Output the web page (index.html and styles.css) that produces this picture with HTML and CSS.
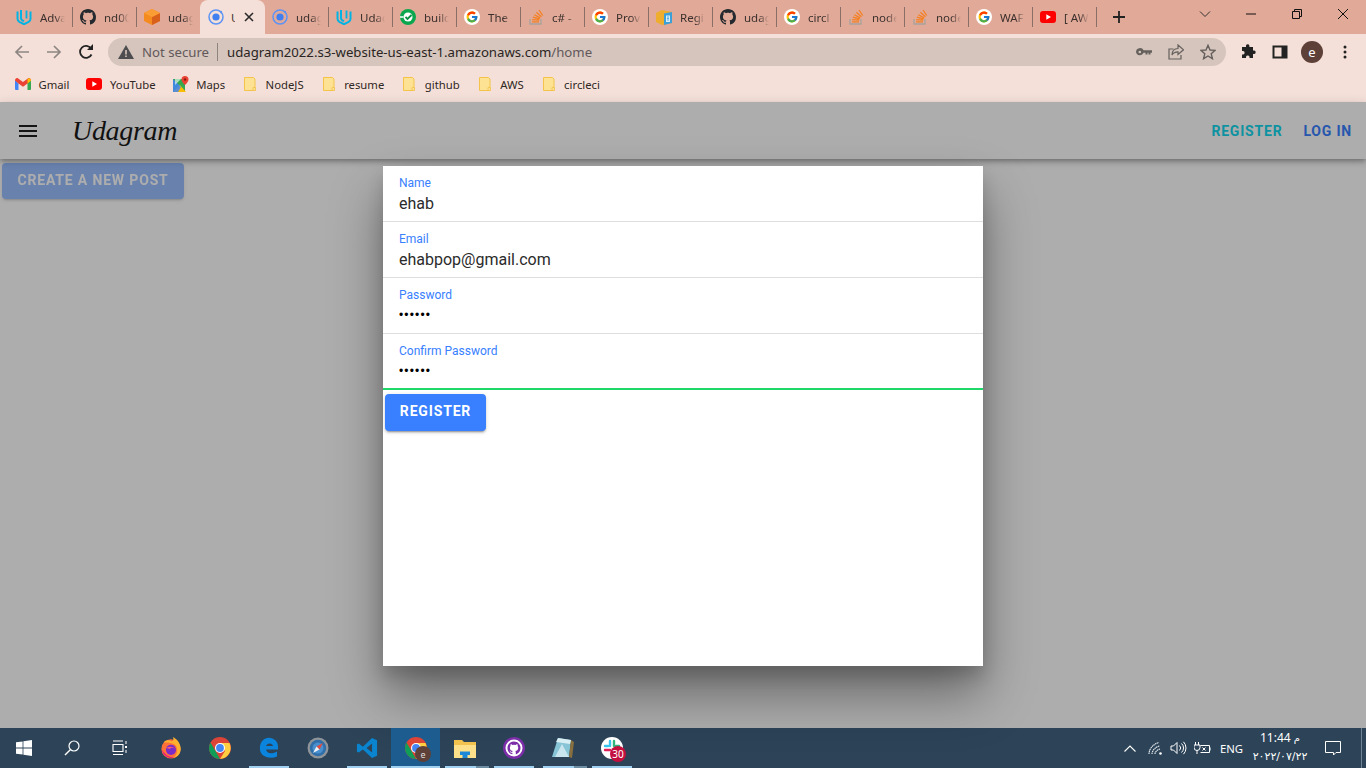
FILE: index.html
```html
<!DOCTYPE html>
<html lang="en">
<head>
<meta charset="utf-8">
<title>Udagram</title>
<link rel="stylesheet" href="styles.css">
</head>
<body>
<svg class="defs" width="0" height="0" aria-hidden="true">
  <defs>
    <symbol id="i-udacity" viewBox="0 0 16 16"><path d="M1.500 2.500v7.300c0 1.500.7 2.400 1.900 3.100L8 15.200l4.600-2.300c1.200-.7 1.900-1.600 1.900-3.100V2.500" fill="none" stroke="#02b3e4" stroke-width="2"/><path d="M5 1v8.300c0 .9.500 1.500 1.300 2l1.700.9" fill="none" stroke="#02b3e4" stroke-width="2"/><path d="M10.500 1.500v8" fill="none" stroke="#02b3e4" stroke-width="1.800"/></symbol>
    <symbol id="i-github" viewBox="0 0 16 16"><path fill="#24292e" d="M8 0C3.580 0 0 3.580 0 8c0 3.540 2.290 6.530 5.470 7.590.4.070.55-.17.55-.38 0-.19-.01-.82-.01-1.490-2.010.37-2.530-.49-2.690-.94-.09-.23-.48-.94-.82-1.130-.28-.15-.68-.52-.01-.53.63-.01 1.080.58 1.230.82.72 1.210 1.870.87 2.330.66.070-.52.280-.87.510-1.070-1.780-.2-3.640-.89-3.640-3.950 0-.87.310-1.590.820-2.150-.08-.2-.36-1.020.080-2.120 0 0 .67-.21 2.200.82.64-.18 1.320-.27 2-.27.68 0 1.360.09 2 .27 1.530-1.040 2.200-.82 2.200-.82.44 1.100.16 1.920.08 2.120.51.56.82 1.270.82 2.150 0 3.070-1.870 3.750-3.650 3.950.29.25.54.73.54 1.480 0 1.070-.01 1.930-.01 2.200 0 .21.15.46.55.38A8.013 8.013 0 0 0 16 8c0-4.420-3.580-8-8-8z"/></symbol>
    <symbol id="i-box" viewBox="0 0 16 16"><path d="M8 0 16 4v8l-8 4-8-4V4z" fill="#f58a1f"/><path d="M8 8 16 4v8l-8 4z" fill="#d9601a"/><path d="M8 0 16 4 8 8 0 4z" fill="#fb9d35"/></symbol>
    <symbol id="i-ionic" viewBox="0 0 16 16"><circle cx="8" cy="8" r="7" fill="none" stroke="#5c93f5" stroke-width="1.500"/><circle cx="8" cy="8" r="3.600" fill="#3f7ff0"/><circle cx="13" cy="3" r="1.200" fill="#5c93f5"/></symbol>
    <symbol id="i-build" viewBox="0 0 16 16"><circle cx="8" cy="8" r="8" fill="#0ba74f"/><circle cx="8" cy="8" r="4.500" fill="#fff"/><path d="M5.500 8 7.500 10 11.500 6" fill="none" stroke="#0b8f44" stroke-width="1.800"/><path d="M0 8h3.500" stroke="#fff" stroke-width="1.500"/></symbol>
    <symbol id="i-google" viewBox="0 0 16 16"><circle cx="8" cy="8" r="8" fill="#fff"/><svg x="1.500" y="1.500" width="13" height="13" viewBox="0 0 48 48"><path fill="#FFC107" d="M43.611 20.083H42V20H24v8h11.303c-1.649 4.657-6.080 8-11.303 8-6.627 0-12-5.373-12-12s5.373-12 12-12c3.059 0 5.842 1.154 7.961 3.039l5.657-5.657C34.046 6.053 29.268 4 24 4 12.955 4 4 12.955 4 24s8.955 20 20 20 20-8.955 20-20c0-1.341-.138-2.650-.389-3.917z"/><path fill="#FF3D00" d="M6.306 14.691l6.571 4.819C14.655 15.108 18.961 12 24 12c3.059 0 5.842 1.154 7.961 3.039l5.657-5.657C34.046 6.053 29.268 4 24 4 16.318 4 9.656 8.337 6.306 14.691z"/><path fill="#4CAF50" d="M24 44c5.166 0 9.860-1.977 13.409-5.192l-6.190-5.238A11.910 11.910 0 0 1 24 36c-5.202 0-9.619-3.317-11.283-7.946l-6.522 5.025C9.505 39.556 16.227 44 24 44z"/><path fill="#1976D2" d="M43.611 20.083H42V20H24v8h11.303a12.040 12.040 0 0 1-4.087 5.571l6.193 5.237C36.971 39.205 44 34 44 24c0-1.341-.138-2.650-.389-3.917z"/></svg></symbol>
    <symbol id="i-so" viewBox="0 0 16 16"><path d="M2 10v5h11v-5" fill="none" stroke="#a8a39d" stroke-width="1.300"/><path d="M4 12.800h7M4.200 10.600l6.900.6M4.900 8.200l6.700 1.800M6.300 5.700l6 3.200M8.400 3.300l5.100 4.400M11 1l3.800 5.500" fill="none" stroke="#f48024" stroke-width="1.300"/></symbol>
    <symbol id="i-reg" viewBox="0 0 16 16"><path d="M0 4 6 1l10 2v11l-10 2-6-3z" fill="#eead2d"/><path d="M8 4.500 16 3v11l-8 2z" fill="#3d9fd8"/><path d="M10 6.500h4v6.500h-4z" fill="#d7effa"/><path d="M11 8h2M11 9.500h2M11 11h2" stroke="#3d9fd8" stroke-width=".8"/></symbol>
    <symbol id="i-yt" viewBox="0 0 16 12"><rect width="16" height="12" rx="3" fill="#f00"/><path d="M6.300 3.300 11 6 6.300 8.700z" fill="#fff"/></symbol>
    <symbol id="i-folder" viewBox="0 0 16 16"><path d="M2.500 1.500h9l1.500 1.500v11.500H2.500z" fill="#fde293" stroke="#f3c34a"/><path d="M11 14.500h2.500V11.500H11z" fill="#fde293" stroke="#f3c34a" stroke-width=".8"/></symbol>
  </defs>
</svg>

<div class="browser">
  <div class="tabstrip">
    <div class="tab"><svg class="fav"><use href="#i-udacity"/></svg><span class="tab-t">Adva</span></div>
    <div class="tab"><svg class="fav"><use href="#i-github"/></svg><span class="tab-t">nd00</span></div>
    <div class="tab tab-pre"><svg class="fav"><use href="#i-box"/></svg><span class="tab-t">udag</span></div>
    <div class="tab tab-active"><svg class="fav"><use href="#i-ionic"/></svg><span class="tab-t tab-t-short">U</span><svg class="tab-x" viewBox="0 0 10 10"><path d="M1 1l8 8M9 1l-8 8" stroke="#2b2b2b" stroke-width="1.600"/></svg></div>
    <div class="tab"><svg class="fav"><use href="#i-ionic"/></svg><span class="tab-t">udag</span></div>
    <div class="tab"><svg class="fav"><use href="#i-udacity"/></svg><span class="tab-t">Udac</span></div>
    <div class="tab"><svg class="fav"><use href="#i-build"/></svg><span class="tab-t">build</span></div>
    <div class="tab"><svg class="fav"><use href="#i-google"/></svg><span class="tab-t">The</span></div>
    <div class="tab"><svg class="fav"><use href="#i-so"/></svg><span class="tab-t">c# -</span></div>
    <div class="tab"><svg class="fav"><use href="#i-google"/></svg><span class="tab-t">Prov</span></div>
    <div class="tab"><svg class="fav"><use href="#i-reg"/></svg><span class="tab-t">Regi</span></div>
    <div class="tab"><svg class="fav"><use href="#i-github"/></svg><span class="tab-t">udag</span></div>
    <div class="tab"><svg class="fav"><use href="#i-google"/></svg><span class="tab-t">circl</span></div>
    <div class="tab"><svg class="fav"><use href="#i-so"/></svg><span class="tab-t">node</span></div>
    <div class="tab"><svg class="fav"><use href="#i-so"/></svg><span class="tab-t">node</span></div>
    <div class="tab"><svg class="fav"><use href="#i-google"/></svg><span class="tab-t">WAF</span></div>
    <div class="tab"><svg class="fav fav-yt"><use href="#i-yt"/></svg><span class="tab-t">[ AW</span></div>
    <svg class="newtab" viewBox="0 0 12 12"><path d="M6 0v12M0 6h12" stroke="#222" stroke-width="1.800"/></svg>
    <div class="win-controls">
      <svg class="wc wc-chev" viewBox="0 0 12 12"><path d="M1 3.500l5 5 5-5" fill="none" stroke="#333" stroke-width="1"/></svg>
      <svg class="wc" viewBox="0 0 12 12"><path d="M1 6h10" stroke="#111" stroke-width="1"/></svg>
      <svg class="wc" viewBox="0 0 12 12"><path d="M1.500 3.500h7v7h-7zM3.500 3.500v-2h7v7h-2" fill="none" stroke="#111" stroke-width="1"/></svg>
      <svg class="wc" viewBox="0 0 12 12"><path d="M1 1l10 10M11 1L1 11" stroke="#111" stroke-width="1"/></svg>
    </div>
  </div>

  <div class="toolbar">
    <div class="nav">
      <svg class="nav-i" viewBox="0 0 16 16"><path d="M15 8H2M8 2 2 8l6 6" fill="none" stroke="#8d8683" stroke-width="1.700"/></svg>
      <svg class="nav-i" viewBox="0 0 16 16"><path d="M1 8h13M8 2l6 6-6 6" fill="none" stroke="#8d8683" stroke-width="1.700"/></svg>
      <svg class="nav-i" viewBox="0 0 16 16"><path d="M13.500 10.500A6 6 0 1 1 13 4.500" fill="none" stroke="#222" stroke-width="1.800"/><path d="M9 6h6V0z" fill="#222"/></svg>
    </div>
    <div class="omnibox">
      <svg class="warn" viewBox="0 0 16 14"><path d="M8 0 16 14H0z" fill="#4d4d50"/><path d="M7.200 5h1.600v4.500H7.200zM7.200 10.500h1.600V12H7.200z" fill="#d5c5bd"/></svg>
      <span class="secure">Not secure</span>
      <span class="omni-sep"></span>
      <span class="url">udagram2022.s3-website-us-east-1.amazonaws.com<span class="url-path">/home</span></span>
      <div class="omni-end">
        <svg class="omni-i" viewBox="0 0 16 16"><path d="M0 8a4 4 0 0 1 7.600-1.700H16v2.500h-1.500v1.700h-2V8.800h-1v1.700h-2V8.800h-1.900A4 4 0 0 1 0 8z" fill="#66605c"/><circle cx="3.800" cy="8" r="1.300" fill="#d5c5bd"/></svg>
        <svg class="omni-i" viewBox="0 0 16 16"><path d="M5.500 5H1v10h12v-4" fill="none" stroke="#66605c" stroke-width="1.200"/><path d="M10 1l5.500 4.800L10 10.500V7.800C7 7.800 5 9 4 11c0-4 2-6.300 6-6.500z" fill="none" stroke="#66605c" stroke-width="1.200"/></svg>
        <svg class="omni-i" viewBox="0 0 16 16"><path d="M8 1.300 10 6l5 .4-3.800 3.300 1.200 5L8 12l-4.400 2.700 1.200-5L1 6.400 6 6z" fill="none" stroke="#66605c" stroke-width="1.400"/></svg>
      </div>
    </div>
    <div class="tool-end">
      <svg class="tool-i tool-puzzle" viewBox="0 0 16 16"><path d="M6 1.500a1.800 1.800 0 0 1 3.400 0V3H13v3.500h1.300a1.800 1.800 0 0 1 0 3.500H13v4H9.500v-1.200a1.800 1.800 0 0 0-3.500 0V14H2v-3.500h1.200a1.800 1.800 0 0 0 0-3.500H2V3h4z" fill="#222"/></svg>
      <svg class="tool-i" viewBox="0 0 16 16"><path d="M1.500 2.500h13v11h-13z" fill="none" stroke="#222" stroke-width="2"/><path d="M9.500 2.500h5v11h-5z" fill="#222"/></svg>
      <span class="avatar">e</span>
      <svg class="tool-dots" viewBox="0 0 4 14"><circle cx="2" cy="2" r="1.500" fill="#222"/><circle cx="2" cy="7" r="1.500" fill="#222"/><circle cx="2" cy="12" r="1.500" fill="#222"/></svg>
    </div>
  </div>

  <div class="bookmarks">
    <div class="bm"><svg class="bm-i" viewBox="0 0 16 12"><path d="M0 2v9a1 1 0 0 0 1 1h2.500V5.500z" fill="#4285f4"/><path d="M16 2v9a1 1 0 0 1-1 1h-2.500V5.500z" fill="#34a853"/><path d="M0 2.500 3.500 5.500 8 8.800l4.500-3.300L16 2.500C16 .5 14.200-.5 12.800.5L8 4 3.200.5C1.800-.5 0 .5 0 2.500z" fill="#ea4335"/><path d="M12.500 1V5.500L16 2.800C16 .8 14 -.5 12.500 1z" fill="#fbbc04"/></svg><span>Gmail</span></div>
    <div class="bm"><svg class="bm-i" viewBox="0 0 16 12"><use href="#i-yt"/></svg><span>YouTube</span></div>
    <div class="bm"><svg class="bm-i" viewBox="0 0 16 16"><path d="M0 3h12v13H0z" fill="#34a853"/><path d="M0 16 7 9l6 7z" fill="#fbbc04"/><path d="M0 3l8 8-3 5H0z" fill="#4285f4" opacity=".85"/><path d="M2 3h6l-6 6z" fill="#fff" opacity=".6"/><path d="M12 0a3.500 3.500 0 0 1 3.500 3.500C15.500 6 12 9 12 9S8.500 6 8.500 3.500A3.500 3.500 0 0 1 12 0z" fill="#ea4335"/><circle cx="12" cy="3.500" r="1.200" fill="#8a1b12"/></svg><span>Maps</span></div>
    <div class="bm"><svg class="bm-i"><use href="#i-folder"/></svg><span>NodeJS</span></div>
    <div class="bm"><svg class="bm-i"><use href="#i-folder"/></svg><span>resume</span></div>
    <div class="bm"><svg class="bm-i"><use href="#i-folder"/></svg><span>github</span></div>
    <div class="bm"><svg class="bm-i"><use href="#i-folder"/></svg><span>AWS</span></div>
    <div class="bm"><svg class="bm-i"><use href="#i-folder"/></svg><span>circleci</span></div>
  </div>
</div>

<main class="page">
  <header class="appbar">
    <svg class="burger" viewBox="0 0 18 12"><path d="M0 1h18M0 6h18M0 11h18" stroke="#1f1f1f" stroke-width="2"/></svg>
    <span class="logo">Udagram</span>
    <div class="appbar-end">
      <span class="link link-teal">REGISTER</span>
      <span class="link link-blue">LOG IN</span>
    </div>
  </header>
  <div class="content">
    <button class="btn btn-create">CREATE A NEW POST</button>
  </div>
  <div class="backdrop"></div>
  <section class="modal">
    <div class="field"><label class="f-label">Name</label><div class="f-value">ehab</div></div>
    <div class="field"><label class="f-label">Email</label><div class="f-value">ehabpop@gmail.com</div></div>
    <div class="field"><label class="f-label">Password</label><div class="f-dots">••••••</div></div>
    <div class="field field-valid"><label class="f-label">Confirm Password</label><div class="f-dots">••••••</div></div>
    <button class="btn btn-register">REGISTER</button>
  </section>
</main>

<footer class="taskbar">
  <div class="tb-sys">
    <div class="tb-cell"><svg class="tb-win" viewBox="0 0 16 16"><path d="M0 2.300 6.600 1.400V7.600H0zM7.400 1.300 16 0V7.600H7.400zM0 8.400H6.600V14.600L0 13.700zM7.400 8.400H16V16L7.400 14.700z" fill="#fff"/></svg></div>
    <div class="tb-cell"><svg class="tb-win" viewBox="0 0 16 16"><circle cx="10" cy="6" r="5" fill="none" stroke="#fff" stroke-width="1.200"/><path d="M6.300 9.700 1 15" stroke="#fff" stroke-width="1.400"/></svg></div>
    <div class="tb-cell"><svg class="tb-win" viewBox="0 0 16 16"><path d="M1 1h10M1 14.500h10M1 4.500h10v7H1z" fill="none" stroke="#fff" stroke-width="1.100"/><path d="M13 6h2v2h-2zM13.500 1h1v3h-1zM13.500 10h1v3h-1z" fill="#fff"/></svg></div>
  </div>
  <div class="tb-apps">
    <div class="tb-app"><svg class="app-i" viewBox="0 0 22 24"><circle cx="11" cy="13" r="10.500" fill="#ff7139"/><path d="M3 6C5 3 9 3 12 5c2-1 2-3 1-5 4 2 8 6 8.500 12C22 17 19 22 14 22.500 19 18 19 10 14 7.500 10 6 5 6 3 6z" fill="#ffb02e"/><circle cx="11" cy="14" r="5.500" fill="#7a2bc8"/><path d="M6 12c3-2 7-2 10 1-2-1-5-2-6 0z" fill="#ff5a6e"/><path d="M1 14c1 6 7 10 13 8.500C8 22 4 19 1 14z" fill="#e31587"/></svg></div>
    <div class="tb-app"><svg class="app-i" viewBox="0 0 22 22"><circle cx="11" cy="11" r="11" fill="#db4437"/><path d="M11 22A11 11 0 0 1 1.500 5.500L7 15z" fill="#0f9d58"/><path d="M11 6h9.500A11 11 0 0 1 11 22l5-8z" fill="#ffcd40"/><circle cx="11" cy="11" r="5" fill="#fff"/><circle cx="11" cy="11" r="3.900" fill="#4285f4"/></svg></div>
    <div class="tb-app tb-run"><svg class="app-i" viewBox="0 0 20 22"><path d="M1 13C0 5 6 0 11 1c5 .5 8 4 8 8.500v3H7c.5 4 6 5 11 2v5c-7 3-16 .5-17-6.500zM7 9h7c-.5-3.500-6-3.500-7 0z" fill="#0a84dc" fill-rule="evenodd"/></svg></div>
    <div class="tb-app"><svg class="app-i" viewBox="0 0 22 22"><circle cx="11" cy="11" r="10.500" fill="#8e9499"/><circle cx="11" cy="11" r="8.200" fill="#2f6ea8"/><circle cx="11" cy="11" r="5.500" fill="#4a90cf"/><path d="M16 6 12.500 12.500 9.500 9.500z" fill="#e34b3c"/><path d="M6 16 9.500 9.500 12.500 12.500z" fill="#eef3f7"/></svg></div>
    <div class="tb-app tb-run"><svg class="app-i" viewBox="0 0 24 24"><path d="M17.500 1 23 3.500v17L17.500 23 7.500 13.500 3 17 1 16V8l2-1 4.500 3.500zM17.500 7 11.500 12l6 5z" fill="#0a84cf"/></svg></div>
    <div class="tb-app tb-active tb-run"><svg class="app-i" viewBox="0 0 22 22"><circle cx="11" cy="11" r="11" fill="#db4437"/><path d="M11 22A11 11 0 0 1 1.500 5.500L7 15z" fill="#0f9d58"/><path d="M11 6h9.500A11 11 0 0 1 11 22l5-8z" fill="#ffcd40"/><circle cx="11" cy="11" r="5" fill="#fff"/><circle cx="11" cy="11" r="3.900" fill="#4285f4"/></svg><span class="chrome-badge">e</span></div>
    <div class="tb-app tb-run tb-stack"><svg class="app-i" viewBox="0 0 22 20"><path d="M0 2h8l2 2h12v16H0z" fill="#f2c14e"/><path d="M0 7h22v13H0z" fill="#ffe08a"/><path d="M6 17v-3.500h10V17h-2.500v3h-5v-3z" fill="#1e88d8"/></svg></div>
    <div class="tb-app tb-run"><svg class="app-i" viewBox="0 0 22 22"><circle cx="11" cy="11" r="11" fill="#7b2ea8"/><circle cx="11" cy="11" r="8.500" fill="#fff"/><svg x="3.500" y="3.500" width="15" height="15" viewBox="0 0 16 16"><path fill="#7b2ea8" d="M8 1C4.100 1 1 4.100 1 8c0 3.100 2 5.700 4.800 6.600.4.100.5-.2.500-.3v-1.300c-1.800.4-2.200-.8-2.200-.8-.3-.7-.7-.9-.7-.9-.6-.4 0-.4 0-.4.600 0 1 .7 1 .7.600 1 1.500.7 1.900.5.100-.4.200-.7.400-.9-1.500-.2-3.100-.8-3.100-3.400 0-.8.300-1.400.7-1.900-.1-.2-.3-.9.100-1.800 0 0 .6-.2 1.900.7a6.500 6.500 0 0 1 3.500 0c1.300-.9 1.900-.7 1.900-.7.400.9.200 1.600.1 1.800.4.500.7 1.100.7 1.900 0 2.700-1.600 3.200-3.100 3.400.2.200.5.600.5 1.300v1.900c0 .2.100.4.500.3C13 13.700 15 11.100 15 8c0-3.900-3.100-7-7-7z"/></svg></svg></div>
    <div class="tb-app tb-run tb-stack"><svg class="app-i" viewBox="0 0 22 22"><path d="M6 1 19 3 17 20 0 20z" fill="#86c4d6"/><path d="M19 3 22 5 20 21 17 20z" fill="#8a6f3e"/><path d="M6 1 19 3 18 7 4 5z" fill="#d8eef2"/><path d="M3 20 10 7 17 20z" fill="#e6f4f6" opacity=".7"/></svg></div>
    <div class="tb-app tb-run"><svg class="app-i app-slack" viewBox="0 0 22 22"><circle cx="11" cy="11" r="11" fill="#fff"/><path d="M9 4v5" stroke="#36c5f0" stroke-width="2.400" stroke-linecap="round"/><path d="M13 4v5" stroke="#2eb67d" stroke-width="2.400" stroke-linecap="round"/><path d="M4 13h5" stroke="#e01e5a" stroke-width="2.400" stroke-linecap="round"/><path d="M4 9h3" stroke="#36c5f0" stroke-width="2.400" stroke-linecap="round"/><path d="M15 9h3" stroke="#2eb67d" stroke-width="2.400" stroke-linecap="round"/></svg><span class="slack-badge">30</span></div>
  </div>
  <div class="tray">
    <svg class="tr-chev" viewBox="0 0 12 7"><path d="M.5 6.500 6 1l5.500 5.500" fill="none" stroke="#fff" stroke-width="1.100"/></svg>
    <svg class="tr-wifi" viewBox="0 0 16 14"><path d="M1 13C1 8 5 3 11 1.500M4 13c0-3 3-7 7.500-8M7 13c0-2 2-4 5-5" fill="none" stroke="#eef2f5" stroke-width="1.100" stroke-dasharray="1.500 .5"/><circle cx="12.500" cy="12.500" r="1.300" fill="#fff"/></svg>
    <svg class="tr-sound" viewBox="0 0 17 14"><path d="M1 5h2.500L7 1.500v11L3.500 9H1z" fill="none" stroke="#fff"/><path d="M9.500 4.500a3.500 3.500 0 0 1 0 5M11.500 2.500a6 6 0 0 1 0 9M13.500 .8a9 9 0 0 1 0 12.400" fill="none" stroke="#fff"/></svg>
    <svg class="tr-batt" viewBox="0 0 17 12"><path d="M1.500 0v3M4.500 0v3M0 3h6v2.500a3 3 0 0 1-6 0zM3 8.500V12" fill="none" stroke="#fff" stroke-width="1"/><path d="M6.500 3.500h9v7h-9" fill="none" stroke="#fff"/><path d="M8.500 5.500l3 3M11.500 5.500l-3 3" stroke="#fff"/><path d="M16 5.500h1v3h-1z" fill="#9fb0bd"/></svg>
    <span class="tr-lang">ENG</span>
    <div class="tr-clock"><span class="tr-time" dir="ltr">11:44 <bdi class="tr-pm">م</bdi></span><span class="tr-date" dir="ltr">٢٠٢٢/٠٧/٢٢</span></div>
    <svg class="tr-note" viewBox="0 0 16 16"><path d="M.5 1.500h15v11H11l-2.500 2.500v-2.500H.5z" fill="none" stroke="#fff" stroke-width="1"/></svg>
    <span class="tr-desk"></span>
  </div>
</footer>
</body>
</html>
```

FILE: styles.css
```css
* { box-sizing: border-box; }
html, body { margin: 0; padding: 0; }
body {
  width: 1366px;
  height: 768px;
  overflow: hidden;
  display: flex;
  flex-direction: column;
  font-family: "Roboto", "Liberation Sans", sans-serif;
  background: #aeaeae;
}
.defs { display: block; height: 0; width: 0; }
svg { display: block; flex: none; }

/* browser chrome */
.browser { flex: none; font-family: "Noto Sans", "Open Sans", sans-serif; color: #2d2522; }
.tabstrip {
  height: 34px;
  background: #e1a998;
  display: flex;
  align-items: center;
  padding-left: 8px;
}
.tab {
  width: 64px;
  height: 34px;
  flex: none;
  display: flex;
  align-items: center;
  padding-left: 8px;
  gap: 8px;
  position: relative;
  font-size: 11.5px;
}
.tab::after {
  content: "";
  position: absolute;
  right: -1px;
  top: 7px;
  width: 1px;
  height: 20px;
  background: #8a6f66;
}
.fav { width: 16px; height: 16px; }
.fav-yt { height: 12px; }
.tab-t {
  width: 25px;
  overflow: hidden;
  white-space: nowrap;
  color: #3b302d;
  -webkit-mask-image: linear-gradient(90deg, #000 60%, transparent);
  mask-image: linear-gradient(90deg, #000 60%, transparent);
}
.tab-pre::after { display: none; }
.tab-active {
  background: #f5e0d9;
  border-radius: 8px 8px 0 0;
  height: 34px;
  width: 65px;
  margin-right: -1px;
  gap: 7px;
}
.tab-active::after { display: none; }
.tab-t-short { width: 4px; -webkit-mask-image: none; mask-image: none; }
.tab-x { width: 10px; height: 10px; margin-left: 2px; }
.newtab { width: 12px; height: 12px; margin-left: 17px; }
.win-controls {
  margin-left: auto;
  display: flex;
  align-items: center;
  height: 28px;
  align-self: flex-start;
}
.wc { width: 12px; height: 12px; margin: 8px 17px; }

.toolbar {
  height: 34px;
  background: #f5e0d9;
  display: flex;
  align-items: center;
  padding: 2px 0 0 14px;
}
.nav { display: flex; gap: 16px; width: 94px; }
.nav-i { width: 16px; height: 16px; }
.omnibox {
  width: 1118px;
  height: 28px;
  background: #d5c5bd;
  border-radius: 14px;
  display: flex;
  align-items: center;
  padding-left: 10px;
  font-size: 13.2px;
}
.warn { width: 16px; height: 14px; }
.secure { margin-left: 8px; color: #62585a; }
.omni-sep { width: 1px; height: 18px; background: #8f8580; margin: 0 9px 0 8px; }
.url { color: #2a2422; }
.url-path { color: #62585a; }
.omni-end { margin-left: auto; display: flex; gap: 16px; padding-right: 10px; }
.omni-i { width: 16px; height: 16px; }
.tool-end { display: flex; align-items: center; margin-left: 14px; }
.tool-i { width: 16px; height: 16px; margin-right: 17px; }
.tool-puzzle { margin-right: 16px; }
.avatar {
  width: 22px;
  height: 22px;
  border-radius: 50%;
  background: #5d4037;
  color: #fff;
  font-size: 13px;
  display: flex;
  align-items: center;
  justify-content: center;
  margin-left: -4px;
}
.tool-dots { width: 4px; height: 14px; margin-left: 20px; }

.bookmarks {
  height: 34px;
  background: #f5e0d9;
  display: flex;
  align-items: center;
  gap: 17px;
  padding: 0 0 2px 15px;
  font-size: 11.3px;
}
.bm { display: flex; align-items: center; gap: 7.5px; color: #2f2724; }
.bm-i { width: 16px; height: 16px; }

/* app page */
.page {
  flex: 1;
  position: relative;
  background: #fff;
  min-height: 0;
}
.appbar {
  height: 57px;
  background: #fff;
  display: flex;
  align-items: center;
  padding: 0 14px 0 19px;
  box-shadow: 0 2px 4px -1px rgba(0,0,0,.2), 0 4px 5px 0 rgba(0,0,0,.14), 0 1px 10px 0 rgba(0,0,0,.12);
  position: relative;
}
.burger { width: 18px; height: 12px; }
.logo {
  margin-left: 35px;
  font-family: "Liberation Serif", serif;
  font-style: italic;
  font-size: 28px;
  letter-spacing: -.3px;
  color: #1a1a1a;
}
.appbar-end { margin-left: auto; display: flex; gap: 21px; }
.link { font-size: 14px; font-weight: 700; letter-spacing: .8px; }
.link-teal { color: #14d8ee; }
.link-blue { color: #3880ff; }
.content { padding: 4px 2px; }
.btn {
  display: block;
  border: 0;
  border-radius: 4px;
  font-family: inherit;
  font-weight: 700;
  font-size: 14px;
  letter-spacing: .84px;
  color: #fff;
  background: #3880ff;
  box-shadow: 0 3px 1px -2px rgba(0,0,0,.2), 0 2px 2px 0 rgba(0,0,0,.14), 0 1px 5px 0 rgba(0,0,0,.12);
}
.btn-create { width: 182px; height: 36px; padding: 0 0 2px; opacity: .5; }
.backdrop {
  position: absolute;
  inset: 0;
  background: rgba(0,0,0,.32);
}
.modal {
  position: absolute;
  left: 383px;
  top: 64px;
  width: 600px;
  height: 500px;
  background: #fff;
  box-shadow: 0 28px 48px rgba(0,0,0,.4), 0 10px 15px rgba(0,0,0,.15);
}
.field {
  height: 56px;
  padding: 10px 16px 0;
  border-bottom: 1px solid #dedede;
}
.field-valid { border-bottom: 2px solid #1fd868; }
.f-label {
  display: block;
  font-size: 12px;
  line-height: 14px;
  color: #3880ff;
}
.f-value {
  font-size: 16px;
  line-height: 20px;
  margin-top: 4px;
  color: #2b2b2b;
}
.f-dots {
  font-size: 12px;
  line-height: 20px;
  margin-top: 3px;
  color: #000;
  font-family: "Liberation Sans", sans-serif;
  letter-spacing: 1.15px;
}
.btn-register { width: 101px; height: 37px; margin: 4px 0 0 2px; padding: 0 0 3px; }

/* taskbar */
.taskbar {
  height: 40px;
  flex: none;
  background: #2c4358;
  display: flex;
  align-items: stretch;
  color: #fff;
}
.tb-sys { display: flex; width: 146px; }
.tb-cell { width: 48px; display: flex; align-items: center; justify-content: center; }
.tb-win { width: 16px; height: 16px; }
.tb-apps { display: flex; }
.tb-app {
  width: 49px;
  display: flex;
  align-items: center;
  justify-content: center;
  position: relative;
}
.app-i { width: 22px; height: 22px; }
.tb-run::after {
  content: "";
  position: absolute;
  left: 5px;
  right: 4px;
  bottom: 0;
  height: 2px;
  background: #9fd0ef;
}
.tb-active { background: #1d5c8f; }
.tb-active::after { left: 0; right: 0; }
.tb-stack::before {
  content: "";
  position: absolute;
  right: 0;
  bottom: 0;
  width: 13px;
  height: 2px;
  background: #6d8da3;
  z-index: 1;
}
.chrome-badge {
  position: absolute;
  left: 24px;
  top: 18px;
  width: 16px;
  height: 16px;
  border-radius: 50%;
  background: #5d4037;
  color: #ddd;
  font-size: 9px;
  display: flex;
  align-items: center;
  justify-content: center;
  font-family: "Noto Sans", sans-serif;
}
.slack-badge {
  position: absolute;
  left: 23px;
  top: 18px;
  width: 16px;
  height: 16px;
  border-radius: 50%;
  background: #c4103f;
  color: #fff;
  font-size: 10px;
  display: flex;
  align-items: center;
  justify-content: center;
  font-family: "Noto Sans", sans-serif;
}
.tray {
  margin-left: auto;
  display: flex;
  align-items: center;
  font-family: "Noto Sans", "DejaVu Sans", sans-serif;
}
.tr-chev { width: 12px; height: 7px; margin-right: 12px; }
.tr-wifi { width: 16px; height: 14px; margin-right: 6px; }
.tr-sound { width: 17px; height: 14px; margin-right: 7px; }
.tr-batt { width: 17px; height: 12px; margin-right: 9px; }
.tr-lang { font-size: 11.3px; width: 32px; }
.tr-clock {
  display: flex;
  flex-direction: column;
  align-items: center;
  width: 56px;
  font-size: 12px;
  line-height: 18px;
  padding-bottom: 1px;
}
.tr-pm { font-family: "DejaVu Sans", sans-serif; font-size: 10px; }
.tr-date { font-family: "DejaVu Sans", sans-serif; font-size: 11px; white-space: nowrap; }
.tr-note { width: 16px; height: 16px; margin-left: 17px; }
.tr-desk { width: 1px; height: 40px; background: #6f8394; margin-left: 20px; margin-right: 4px; }
```
